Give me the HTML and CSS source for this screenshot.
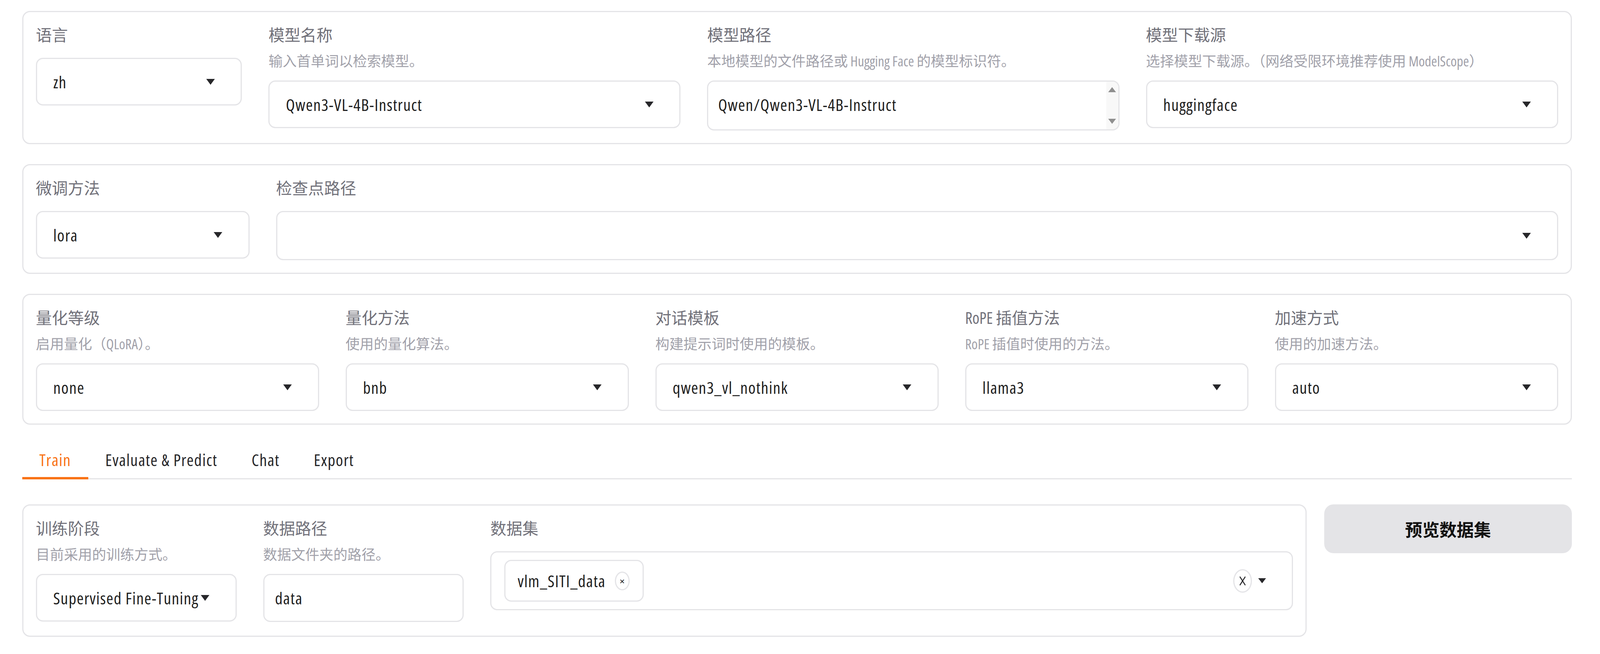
FILE: index.html
```html
<html>
  <head>
    <title>LLaMA Board</title>
    <link rel="stylesheet" href="styles.css">
  </head>
  <body>
    <div class="page">
      <section class="panel grid-model">
        <div class="field">
          <label class="label">语言</label>
          <div class="select"><span class="value">zh</span><span class="caret"></span></div>
        </div>
        <div class="field">
          <label class="label">模型名称</label>
          <div class="info">输入首单词以检索模型。</div>
          <div class="select"><span class="value">Qwen3-VL-4B-Instruct</span><span class="caret"></span></div>
        </div>
        <div class="field">
          <label class="label">模型路径</label>
          <div class="info">本地模型的文件路径或 Hugging Face 的模型标识符。</div>
          <div class="textarea">
            <span class="value">Qwen/Qwen3-VL-4B-Instruct</span>
            <div class="scrollbar"><span class="sb-up"></span><span class="sb-down"></span></div>
          </div>
        </div>
        <div class="field">
          <label class="label">模型下载源</label>
          <div class="info">选择模型下载源。（网络受限环境推荐使用 ModelScope）</div>
          <div class="select"><span class="value">huggingface</span><span class="caret"></span></div>
        </div>
      </section>

      <section class="panel grid-finetune">
        <div class="field">
          <label class="label">微调方法</label>
          <div class="select"><span class="value">lora</span><span class="caret"></span></div>
        </div>
        <div class="field">
          <label class="label">检查点路径</label>
          <div class="select tall"><span class="value"></span><span class="caret"></span></div>
        </div>
      </section>

      <section class="panel grid-five">
        <div class="field">
          <label class="label">量化等级</label>
          <div class="info">启用量化（QLoRA）。</div>
          <div class="select"><span class="value">none</span><span class="caret"></span></div>
        </div>
        <div class="field">
          <label class="label">量化方法</label>
          <div class="info">使用的量化算法。</div>
          <div class="select"><span class="value">bnb</span><span class="caret"></span></div>
        </div>
        <div class="field">
          <label class="label">对话模板</label>
          <div class="info">构建提示词时使用的模板。</div>
          <div class="select"><span class="value">qwen3_vl_nothink</span><span class="caret"></span></div>
        </div>
        <div class="field">
          <label class="label">RoPE 插值方法</label>
          <div class="info">RoPE 插值时使用的方法。</div>
          <div class="select"><span class="value">llama3</span><span class="caret"></span></div>
        </div>
        <div class="field">
          <label class="label">加速方式</label>
          <div class="info">使用的加速方法。</div>
          <div class="select"><span class="value">auto</span><span class="caret"></span></div>
        </div>
      </section>

      <nav class="tabs">
        <button class="tab active">Train</button>
        <button class="tab">Evaluate &amp; Predict</button>
        <button class="tab">Chat</button>
        <button class="tab">Export</button>
      </nav>

      <div class="train-row">
        <section class="panel grid-train">
          <div class="field">
            <label class="label">训练阶段</label>
            <div class="info">目前采用的训练方式。</div>
            <div class="select"><span class="value">Supervised Fine-Tuning</span><span class="caret"></span></div>
          </div>
          <div class="field">
            <label class="label">数据路径</label>
            <div class="info">数据文件夹的路径。</div>
            <div class="textbox"><span class="value">data</span></div>
          </div>
          <div class="field">
            <label class="label">数据集</label>
            <div class="multi">
              <div class="chip">
                <span class="chip-text">vlm_SITI_data</span>
                <span class="chip-remove">×</span>
              </div>
              <span class="spacer"></span>
              <span class="clear">
                <svg width="20" height="26" viewBox="0 0 20 26"><path d="M3 2 L17 24 M17 2 L3 24" stroke="#27272a" stroke-width="2.4" fill="none"/></svg>
              </span>
              <span class="caret small"></span>
            </div>
          </div>
        </section>
        <div class="side">
          <button class="btn">预览数据集</button>
        </div>
      </div>
    </div>
  </body>
</html>
```

FILE: styles.css
```css
body {
  margin: 0;
  background-color: #ffffff;
  color: #27272a;
  font-family: "Open Sans", "Noto Sans CJK SC", sans-serif;
  font-stretch: condensed;
}
.page {
  display: flex;
  flex-direction: column;
  gap: 51px;
  padding: 28px 1.77vw 0 1.39vw;
}
.panel {
  display: grid;
  column-gap: 1.66vw;
  align-items: start;
  padding: 30px 0.78vw 32px;
  border: 3px solid #e4e4e7;
  border-radius: 20px;
}
.grid-model {
  grid-template-columns: 1fr 2fr 2fr 2fr;
}
.grid-finetune {
  grid-template-columns: 1fr 6fr;
}
.grid-five {
  grid-template-columns: repeat(5, 1fr);
}
.grid-train {
  grid-template-columns: 1fr 1fr 4fr;
  padding-bottom: 35px;
}
.field {
  display: flex;
  flex-direction: column;
  min-width: 0;
}
.label {
  font-size: 41px;
  line-height: 57px;
  padding-bottom: 6px;
  color: #71717a;
}
.info {
  margin-top: 5px;
  margin-bottom: -2px;
  font-size: 36px;
  line-height: 55px;
  color: #a1a1aa;
  white-space: nowrap;
}
.label + .select,
.label + .multi,
.info + .select,
.info + .textarea,
.info + .textbox {
  margin-top: 24px;
}
.select,
.textarea,
.textbox,
.multi {
  box-sizing: border-box;
  display: flex;
  align-items: center;
  border: 3px solid #e4e4e7;
  border-radius: 18px;
  background: #ffffff;
  font-size: 42.5px;
  color: #1f1f1f;
}
.select {
  height: 122px;
  padding: 0 1.62vw 0 1.01vw;
}
.select.tall {
  height: 126px;
}
.value,
.chip-text,
.tab {
  letter-spacing: 1.4px;
}
.value {
  flex: 1;
  min-width: 0;
  white-space: nowrap;
  overflow: hidden;
}
.caret {
  flex: none;
  width: 0;
  height: 0;
  border-left: 0.29vw solid transparent;
  border-right: 0.29vw solid transparent;
  border-top: 15px solid #27272a;
}
.caret.small {
  border-left-width: 0.25vw;
  border-right-width: 0.25vw;
  border-top-width: 13px;
}
.textarea {
  height: 128px;
  padding: 0 0 0 0.61vw;
  align-items: stretch;
}
.textarea .value {
  align-self: center;
  margin-top: -6px;
}
.scrollbar {
  width: 0.74vw;
  display: flex;
  flex-direction: column;
  justify-content: space-between;
  align-items: center;
  padding: 14px 0;
  background: #f8f8f8;
  border-radius: 0 15px 15px 0;
}
.sb-up,
.sb-down {
  width: 0;
  height: 0;
  border-left: 0.25vw solid transparent;
  border-right: 0.25vw solid transparent;
}
.sb-up {
  border-bottom: 13px solid #8f8f8f;
}
.sb-down {
  border-top: 13px solid #8f8f8f;
}
.textbox {
  height: 123px;
  padding: 0 0.67vw;
}
.multi {
  height: 151px;
  padding: 0 1.62vw 0 0.8vw;
  gap: 0.4vw;
}
.chip {
  box-sizing: border-box;
  height: 107px;
  display: flex;
  align-items: center;
  gap: 0.57vw;
  padding: 0 0.82vw 0 0.76vw;
  border: 3px solid #e4e4e7;
  border-radius: 18px;
}
.chip-remove {
  box-sizing: border-box;
  width: 0.93vw;
  height: 48px;
  border: 3px solid #e4e4e7;
  border-radius: 50%;
  display: flex;
  align-items: center;
  justify-content: center;
  font-size: 28px;
  line-height: 1;
}
.spacer {
  flex: 1;
}
.clear {
  box-sizing: border-box;
  width: 1.16vw;
  height: 60px;
  border: 3px solid #e4e4e7;
  border-radius: 50%;
  display: flex;
  align-items: center;
  justify-content: center;
}
.tabs {
  display: flex;
  border-bottom: 3px solid #e4e4e7;
}
.tab {
  margin-bottom: -3px;
  padding: 7px 1.07vw 13px;
  border: none;
  border-bottom: 6px solid transparent;
  background: none;
  font-family: inherit;
  font-stretch: condensed;
  font-size: 42.5px;
  line-height: 63px;
  color: #27272a;
}
.tab.active {
  color: #f97316;
  border-bottom-color: #f97316;
}
.train-row {
  display: grid;
  grid-template-columns: 1fr 15.46vw;
  column-gap: 1.1vw;
  align-items: start;
  margin-top: 13px;
}
.btn {
  width: 100%;
  height: 125px;
  border: none;
  border-radius: 24px;
  background-color: #e4e4e7;
  font-family: inherit;
  font-size: 44px;
  font-weight: 700;
  color: #111111;
}
```
